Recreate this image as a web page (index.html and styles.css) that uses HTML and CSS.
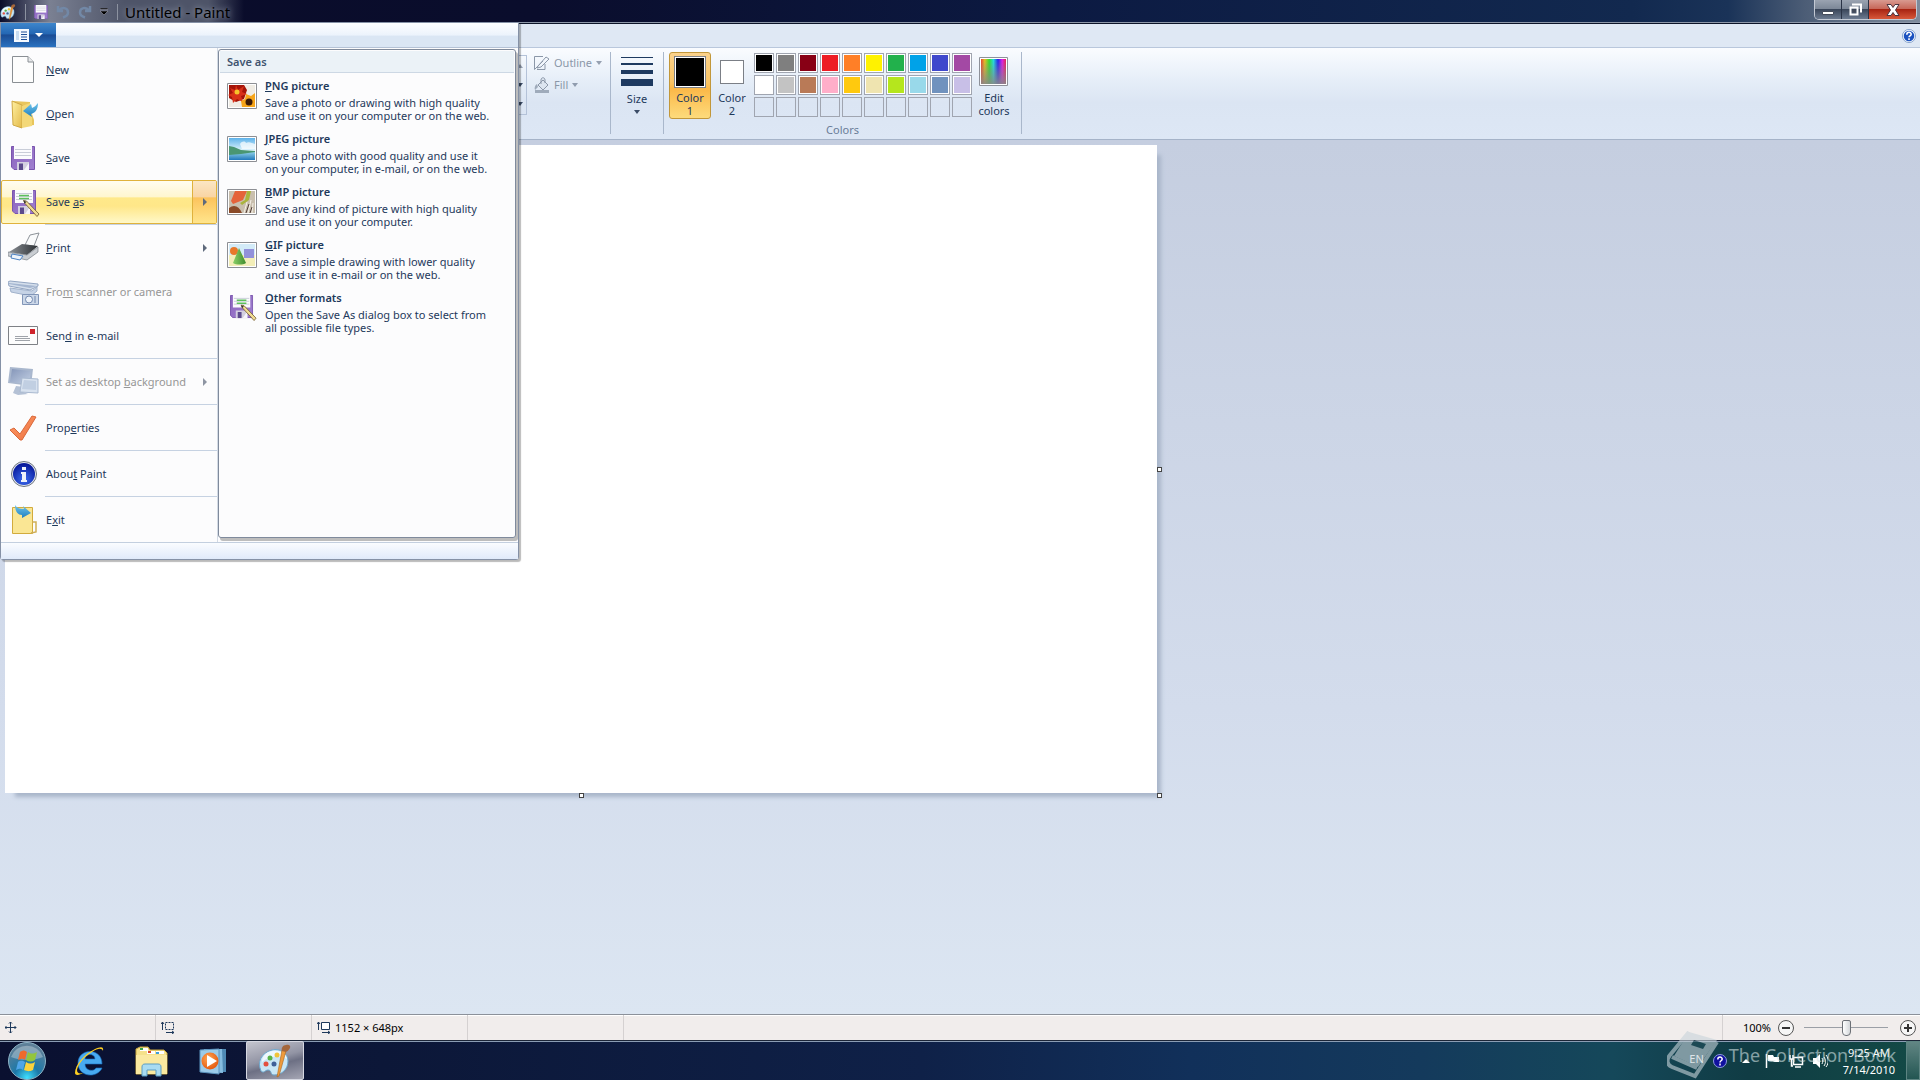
FILE: index.html
```
<!DOCTYPE html>
<html lang="en">
<head>
  <meta charset="utf-8">
  <title>Untitled - Paint</title>
  <link rel="stylesheet" href="styles.css">
</head>
<body>
  <!-- shared icons -->
  <svg class="defs" width="0" height="0">
    <defs>
      <linearGradient id="g-purple" x1="0" y1="0" x2="1" y2="1"><stop offset="0" stop-color="#8a63bd"/><stop offset="1" stop-color="#a080d0"/></linearGradient>
      <linearGradient id="g-folder" x1="0" y1="0" x2="1" y2="1"><stop offset="0" stop-color="#fff0a0"/><stop offset="1" stop-color="#e2b94a"/></linearGradient>
      <linearGradient id="g-blue" x1="0" y1="0" x2="0" y2="1"><stop offset="0" stop-color="#6fc4ea"/><stop offset="1" stop-color="#1f7fc0"/></linearGradient>
      <linearGradient id="g-check" x1="0" y1="0" x2="1" y2="1"><stop offset="0" stop-color="#ff9d68"/><stop offset="1" stop-color="#ec7040"/></linearGradient>
      <linearGradient id="g-sky" x1="0" y1="0" x2="0" y2="1"><stop offset="0" stop-color="#5db2ea"/><stop offset="1" stop-color="#e6f7fd"/></linearGradient>
      <linearGradient id="g-sea" x1="0" y1="0" x2="0" y2="1"><stop offset="0" stop-color="#8fd0e8"/><stop offset="1" stop-color="#2178bb"/></linearGradient>
      <linearGradient id="g-screen" x1="0" y1="0" x2="1" y2="1"><stop offset="0" stop-color="#8495b8"/><stop offset="1" stop-color="#c3d0e4"/></linearGradient>
      <linearGradient id="g-printer" x1="0" y1="0" x2="1" y2="0"><stop offset="0" stop-color="#8c9197"/><stop offset="1" stop-color="#2c3034"/></linearGradient>
      <linearGradient id="g-cone" x1="0" y1="0" x2="1" y2="0"><stop offset="0" stop-color="#8bd068"/><stop offset="1" stop-color="#3f8c2c"/></linearGradient>
      <radialGradient id="g-info" cx="50%" cy="75%" r="70%"><stop offset="0" stop-color="#3c6cf0"/><stop offset="1" stop-color="#08199a"/></radialGradient>
      <radialGradient id="g-orb" cx="50%" cy="95%" r="85%"><stop offset="0" stop-color="#3fe0ff"/><stop offset=".4" stop-color="#1c78a8"/><stop offset="1" stop-color="#5d7f98"/></radialGradient>
      <radialGradient id="g-play" cx="40%" cy="35%" r="70%"><stop offset="0" stop-color="#ffa552"/><stop offset="1" stop-color="#e4560c"/></radialGradient>
      <linearGradient id="g-rainbow"><stop offset="0" stop-color="#e8402a"/><stop offset=".15" stop-color="#e6c021"/><stop offset=".33" stop-color="#2fe02a"/><stop offset=".5" stop-color="#1fdde0"/><stop offset=".68" stop-color="#2020f0"/><stop offset=".85" stop-color="#e01be8"/><stop offset="1" stop-color="#e8204a"/></linearGradient>
      <linearGradient id="g-fade" x1="0" y1="0" x2="0" y2="1"><stop offset="0" stop-color="#888" stop-opacity="0"/><stop offset="1" stop-color="#888" stop-opacity=".9"/></linearGradient>
      <symbol id="i-floppy" viewBox="0 0 24 24">
        <path d="M.5.5h23v23H3L.5 21z" fill="url(#g-purple)" stroke="#7a55ae"/>
        <path d="M3 0h18v13H3z" fill="#fbfbfd"/>
        <path d="M4 3.500h16M4 6.500h16M4 9.500h16" stroke="#c9cdd8"/>
        <path d="M6 16h12v8H6z" fill="#d3cfe0"/>
        <path d="M8 17.500h4V24H8z" fill="#5b4a8c"/>
        <path d="M13 24l5-7v7z" fill="#f7f6fb"/>
      </symbol>
      <symbol id="i-saveas" viewBox="0 0 28 28">
        <use href="#i-floppy" width="24" height="24"/>
        <path d="M7 5.500h10M7 8.500h10" stroke="#5cc05c" stroke-width="1.500"/>
        <path d="M11.500 10.500l3 .5 12.500 13-2 2.500-12-13z" fill="#f0dc92" stroke="#6d5328" stroke-width=".8"/>
        <path d="M11.500 10.500l1 3 2-1.500z" fill="#333"/>
      </symbol>
      <symbol id="i-palette" viewBox="0 0 34 34">
        <path d="M3 27C-1 18 3 9 14 6c8-2 16 3 16 11 0 8-6 14-14 14-4 0-2-5-6-5-3 0-4 4-7 1z" fill="#c9e6f5" stroke="#6da6cc"/>
        <path d="M4 18c0-6 4-10 10-11 7-1 14 2 15 8-8-4-17-3-25 3z" fill="#eef8fd"/>
        <circle cx="8" cy="20" r="2.500" fill="#e3503f"/><circle cx="12" cy="14" r="2.500" fill="#58b348"/><circle cx="19" cy="11" r="2.500" fill="#f0c43a"/><circle cx="16" cy="20" r="2.500" fill="#3f5f97"/>
        <path d="M28 7l-7 25-2 1 5-27z" fill="#ee9b3c" stroke="#a9641d" stroke-width=".6"/>
        <path d="M24 7c-1-3 1-6 4-6 3-1 5 1 4 3-2 3-3 5-8 3z" fill="#a5673c"/>
      </symbol>
      <symbol id="i-help" viewBox="0 0 16 16">
        <circle cx="8" cy="8" r="7.500" fill="#f4f8fd" stroke="#7d9cc8"/>
        <circle cx="8" cy="8" r="6" fill="#1b52c0"/>
        <path d="M5.500 6.500c0-3.500 5-3.500 5-.5 0 2-2.500 1.800-2.500 3.500M8 10.500v2" fill="none" stroke="#fff" stroke-width="1.800"/>
      </symbol>
    </defs>
  </svg>

  <header class="titlebar">
    <div class="quick">
      <svg width="16" height="16"><use href="#i-palette"/></svg>
      <span class="divider"></span>
      <button class="quick-btn" aria-label="Save"><svg width="14" height="14"><use href="#i-floppy"/></svg></button>
      <button class="quick-btn" aria-label="Undo"><svg width="14" height="14" viewBox="0 0 14 14"><path d="M2 1v5h5M3 5.500c3-4 9-3 9 2 0 3-2 4-5 5" fill="none" stroke="#7288a6" stroke-width="2.500"/></svg></button>
      <button class="quick-btn" aria-label="Redo"><svg width="14" height="14" viewBox="0 0 14 14"><path d="M12 1v5H7M11 5.500C8 1.500 2 2.500 2 7.500c0 3 2 4 5 5" fill="none" stroke="#7288a6" stroke-width="2.500"/></svg></button>
      <button class="quick-btn" aria-label="Customize"><svg width="8" height="7" viewBox="0 0 8 7"><path d="M0 0h8v1.500H0zM0 3h8L4 7z" fill="#000" stroke="#ccd" stroke-width=".4"/></svg></button>
      <span class="divider"></span>
    </div>
    <h1 class="title">Untitled - Paint</h1>
    <div class="window-btns">
      <button class="win-btn" aria-label="Minimize"><svg width="14" height="14" viewBox="0 0 14 14"><path d="M1.500 8.500h11v3h-11z" fill="#fff" stroke="#444b5a"/></svg></button>
      <button class="win-btn" aria-label="Restore"><svg width="14" height="14" viewBox="0 0 14 14"><path d="M4 1.500h9v8M2.500 4.500h7v7h-7z" fill="none" stroke="#fff" stroke-width="2"/><path d="M4.500 6.500h3v3h-3z" fill="#444b5a"/></svg></button>
      <button class="win-btn close" aria-label="Close"><svg width="14" height="14" viewBox="0 0 14 14"><path d="M1 1.500h4l2 3 2-3h4L9.500 7l3.500 5.500H9l-2-3-2 3H1L4.500 7z" fill="#fff" stroke="#4b3440"/></svg></button>
    </div>
  </header>

  <nav class="tabs">
    <button class="help" aria-label="Help"><svg width="14" height="14"><use href="#i-help"/></svg></button>
  </nav>

  <section class="ribbon">
    <div class="scroll">
      <span class="arrow up"></span><span class="arrow"></span><span class="arrow last"></span>
    </div>
    <div class="shape-opts">
      <button class="opt" disabled><svg width="16" height="14" viewBox="0 0 16 14"><path d="M9 .5H.5v13L9 5M3 13.500h8V8M4 10l8-9 3 2-8 8-4 1z" fill="none" stroke="#8b97a8"/></svg>Outline<span class="arrow"></span></button>
      <button class="opt" disabled><svg width="16" height="16" viewBox="0 0 16 16"><path d="M4 8l5-5 5 5-5 5zM7 7V3c0-3 4-3 4 0v3" fill="#dce5f0" stroke="#8b97a8"/><path d="M3 7C1 8 0 11 1 13l3-3zM1 13h14v3H1z" fill="#9fabbb"/></svg>Fill<span class="arrow"></span></button>
    </div>
    <div class="group">
      <button class="big size">
        <span class="lines"><i class="l1"></i><i class="l2"></i><i class="l3"></i><i class="l4"></i></span>
        Size<span class="arrow"></span>
      </button>
    </div>
    <div class="group colors">
      <div class="group-row">
        <button class="big selected"><span class="chip black"></span>Color<br>1</button>
        <button class="big"><span class="chip white"></span>Color<br>2</button>
        <div class="palette">
          <button class="cell c-black" aria-label="Black"></button>
          <button class="cell c-gray" aria-label="Gray-50%"></button>
          <button class="cell c-darkred" aria-label="Dark red"></button>
          <button class="cell c-red" aria-label="Red"></button>
          <button class="cell c-orange" aria-label="Orange"></button>
          <button class="cell c-yellow" aria-label="Yellow"></button>
          <button class="cell c-green" aria-label="Green"></button>
          <button class="cell c-turquoise" aria-label="Turquoise"></button>
          <button class="cell c-indigo" aria-label="Indigo"></button>
          <button class="cell c-purple" aria-label="Purple"></button>
          <button class="cell c-white" aria-label="White"></button>
          <button class="cell c-lightgray" aria-label="Gray-25%"></button>
          <button class="cell c-brown" aria-label="Brown"></button>
          <button class="cell c-rose" aria-label="Rose"></button>
          <button class="cell c-gold" aria-label="Gold"></button>
          <button class="cell c-lightyellow" aria-label="Light yellow"></button>
          <button class="cell c-lime" aria-label="Lime"></button>
          <button class="cell c-lightturquoise" aria-label="Light turquoise"></button>
          <button class="cell c-bluegray" aria-label="Blue-gray"></button>
          <button class="cell c-lavender" aria-label="Lavender"></button>
          <button class="cell" aria-label="Empty"></button>
          <button class="cell" aria-label="Empty"></button>
          <button class="cell" aria-label="Empty"></button>
          <button class="cell" aria-label="Empty"></button>
          <button class="cell" aria-label="Empty"></button>
          <button class="cell" aria-label="Empty"></button>
          <button class="cell" aria-label="Empty"></button>
          <button class="cell" aria-label="Empty"></button>
          <button class="cell" aria-label="Empty"></button>
          <button class="cell" aria-label="Empty"></button>
        </div>
        <button class="big edit">
          <svg width="30" height="30" viewBox="0 0 30 30"><path d="M.5.5h28v28H.5z" fill="#fff" stroke="#8d9199"/><path d="M2 2h25v25H2z" fill="url(#g-rainbow)"/><path d="M2 2h25v25H2z" fill="url(#g-fade)"/></svg>
          Edit<br>colors
        </button>
      </div>
      <div class="group-name">Colors</div>
    </div>
  </section>

  <main class="workspace">
    <div class="sheet">
      <canvas class="drawing" width="1152" height="648"></canvas>
      <span class="handle right"></span>
      <span class="handle bottom"></span>
      <span class="handle corner"></span>
    </div>
  </main>

  <footer class="status">
    <div class="stat"><svg width="12" height="12" viewBox="0 0 12 12"><path d="M5.500 0v11M0 5.500h11M4 1.500l1.500-1.500L7 1.500M4 9.500L5.500 11 7 9.500M1.500 4L0 5.500 1.500 7M9.500 4L11 5.500 9.500 7" fill="none" stroke="#1e395b"/></svg></div>
    <div class="stat"><svg width="14" height="13" viewBox="0 0 14 13"><path d="M4.500 1.500h8v7h-8z" fill="none" stroke="#1e395b" stroke-dasharray="2 1"/><path d="M1.500 1v8M0 3l1.500-2L3 3M5 11.500h8M11 10l2 1.500-2 1.500" fill="none" stroke="#1e395b"/></svg></div>
    <div class="stat"><svg width="14" height="13" viewBox="0 0 14 13"><path d="M4.500 1.500h8v7h-8z" fill="#fff" stroke="#1e395b"/><path d="M1.500 1v8M0 3l1.500-2L3 3M5 11.500h8M11 10l2 1.500-2 1.500" fill="none" stroke="#1e395b"/></svg>1152 × 648px</div>
    <div class="stat"></div>
    <div class="stat wide"></div>
    <div class="zoom">
      <label for="zoom">100%</label>
      <button class="round" aria-label="Zoom out"><svg width="16" height="16" viewBox="0 0 16 16"><circle cx="8" cy="8" r="7.500" fill="#f6f6f6" stroke="#555"/><path d="M4 8h8" stroke="#333" stroke-width="2"/></svg></button>
      <input type="range" id="zoom" min="0" max="100" value="50">
      <button class="round" aria-label="Zoom in"><svg width="16" height="16" viewBox="0 0 16 16"><circle cx="8" cy="8" r="7.500" fill="#f6f6f6" stroke="#555"/><path d="M4 8h8M8 4v8" stroke="#333" stroke-width="2"/></svg></button>
    </div>
  </footer>

  <footer class="taskbar">
    <button class="start" aria-label="Start">
      <svg width="38" height="38" viewBox="0 0 38 38"><circle cx="19" cy="19" r="18.500" fill="url(#g-orb)" stroke="#8fb4c6"/><path d="M3 15a17 17 0 0 1 32 0c-9 4-23 4-32 0z" fill="#fff" opacity=".3"/>
      <path d="M12 10c3-2 5-2 7 0l-2 8c-2-2-4-1-7 0z" fill="#ee6a2c"/><path d="M20 10c3 2 5 2 9 0l-2 8c-3 2-6 2-9 0z" fill="#93c53c"/><path d="M10 20c3-2 5-1 7 0l-2 8c-2-2-4-1-7 0z" fill="#4fa5e8"/><path d="M18 20c3 2 6 2 9 0l-2 8c-4 2-6 1-9 0z" fill="#fbd23c"/></svg>
    </button>
    <button class="task" aria-label="Internet Explorer">
      <svg width="32" height="32" viewBox="0 0 32 32"><path d="M29 19H12c0 7 9 8 11 4h6c-5 11-24 9-24-5C5 3 29 2 29 19zM12 14h10c0-6-10-6-10 0z" fill="#48aaf0" stroke="#1770c2" stroke-width=".6"/><path d="M30 6c1-5-3-4-8-2C11 9 2 20 2 28c0 3 5 2 8 0-4 1-6 0-6-3 1-6 8-14 15-18 6-4 10-4 11-1z" fill="#ffd022"/></svg>
    </button>
    <button class="task" aria-label="Windows Explorer">
      <svg width="34" height="32" viewBox="0 0 34 32"><path d="M2 4l4-2h8l2 3h14l3 3v21H2z" fill="#f5e18a" stroke="#c7a53c"/><path d="M6 3h8v3H6zM13 6h8v3h-8zM22 6h8v3h-8z" fill="#fff"/><path d="M6 3h3v2H6z" fill="#33a44a"/><path d="M14 6h3v2h-3z" fill="#d8442c"/><path d="M22 7h3v2h-3z" fill="#3d9edb"/><path d="M2 10h31v19H2z" fill="#fae9a0"/><path d="M8 31V22c0-2 1-3 3-3h13c2 0 3 1 3 3v9h-5v-6h-9v6z" fill="#a8dbf2" stroke="#5b9dc4"/></svg>
    </button>
    <button class="task" aria-label="Media Player">
      <svg width="28" height="28" viewBox="0 0 28 28"><path d="M8 2h19v23H8z" fill="#4f8ab5"/><path d="M5 2h18l1 24-19-1z" fill="#86bde0"/><path d="M1 3l19-1v25L1 25z" fill="#9bcbe9" stroke="#5b93bd"/><circle cx="11" cy="14" r="8.500" fill="url(#g-play)"/><path d="M8 8l10 6-10 6z" fill="#fff"/></svg>
    </button>
    <button class="task active" aria-label="Paint"><svg width="34" height="34"><use href="#i-palette"/></svg></button>
    <div class="tray">
      <span class="lang">EN</span>
      <svg width="14" height="14" viewBox="0 0 14 14"><circle cx="7" cy="7" r="6.500" fill="#10109e" stroke="#8f9ae0"/><path d="M4.800 5.500c0-3.200 4.400-3 4.400-.5C9.200 7 7 6.500 7 8.500M7 9.500v2" fill="none" stroke="#fff" stroke-width="1.500"/></svg>
      <span class="tray-arrow"></span>
      <svg width="15" height="14" viewBox="0 0 15 14"><path d="M1.500 0v14" stroke="#fff" stroke-width="1.500"/><path d="M3 1h5l1 2h5v5H9L8 7H3z" fill="#fff"/></svg>
      <svg width="15" height="14" viewBox="0 0 15 14"><path d="M4.500 3.500h9v7h-9zM6 13h6M1 1v4h3V1M2.500 5v7H4" fill="none" stroke="#fff" stroke-width="1.500"/></svg>
      <svg width="15" height="14" viewBox="0 0 15 14"><path d="M0 4h3l4-4v14l-4-4H0z" fill="#fff"/><path d="M9 4c1 2 1 4 0 6M11 3c2 3 2 6 0 9M13 1c3 4 3 8 0 12" fill="none" stroke="#fff"/></svg>
      <div class="clock"><span>9:25 AM</span><span>7/14/2010</span></div>
      <button class="show-desktop" aria-label="Show desktop"></button>
    </div>
    <div class="watermark">
      <svg width="54" height="48" viewBox="0 0 54 48"><path d="M22 1l28 8-19 27-24-11z" fill="#c8d4da"/><path d="M27 9l12 4-3 5-12-4z" fill="#24505a"/><path d="M22 1L3 24c-4 5-3 10 2 12l23 9 22-34M5 26l25 11" fill="none" stroke="#c8d4da" stroke-width="4"/></svg>
      <span>The Collection Book</span>
    </div>
  </footer>

  <div class="app-menu">
    <div class="menu-top">
      <button class="file-btn" aria-label="Paint menu">
        <svg width="15" height="13" viewBox="0 0 15 13"><path d="M0 0h15v13H0z" fill="#f4f9ff"/><path d="M2 2h3v9H2z" fill="#c8dcf0"/><path d="M7 3h6M7 5.500h6M7 8h6M7 10.500h6" stroke="#1e4f96"/></svg>
        <span class="arrow"></span>
      </button>
    </div>
    <div class="menu-body">
      <ul class="menu-list">
        <li><button class="item">
          <svg width="32" height="32" viewBox="0 0 32 32"><path d="M4.500 2.500H20l5.500 5.500v20.500h-21z" fill="#fdfdfd" stroke="#8a8f94"/><path d="M20 2.500V8h5.500" fill="#e6e8ea" stroke="#8a8f94"/></svg>
          <span class="label"><u>N</u>ew</span></button></li>
        <li><button class="item">
          <svg width="32" height="32" viewBox="0 0 32 32"><path d="M5 3l17 1v6l4 12v5l-16 2z" fill="#e8c55c"/><path d="M4 3l10 4v23l-9-3z" fill="url(#g-folder)" stroke="#d0a945"/><path d="M14 8l8-3 2 14v9l-10 2z" fill="#f3d878"/><path d="M15 13l8-7 1 4c3-1 4-3 6-5 0 7-3 10-7 11l1 3z" fill="url(#g-blue)"/></svg>
          <span class="label"><u>O</u>pen</span></button></li>
        <li><button class="item">
          <svg width="32" height="32"><use href="#i-floppy" x="3" y="4" width="24" height="24"/></svg>
          <span class="label"><u>S</u>ave</span></button></li>
        <li><button class="item hot">
          <svg width="32" height="32"><use href="#i-saveas" x="4" y="4" width="28" height="28"/></svg>
          <span class="label">Save <u>a</u>s</span><span class="more"><span class="arrow side"></span></span></button></li>
        <li class="line"></li>
        <li><button class="item">
          <svg width="32" height="32" viewBox="0 0 32 32"><path d="M17 13l5-10 9-2-5 13z" fill="#fafbfc" stroke="#8c9298"/><path d="M1 20l13-8 16 2-11 9z" fill="url(#g-printer)"/><path d="M0 20l19 3 11-8v5l-11 8-19-4z" fill="#c9cdd2" stroke="#797f86" stroke-width=".7"/><path d="M4 22l11 2-3 4-9-2z" fill="#eef4fb" stroke="#4d83c4"/></svg>
          <span class="label"><u>P</u>rint</span><span class="more"><span class="arrow side"></span></span></button></li>
        <li><button class="item" disabled>
          <svg width="32" height="32" viewBox="0 0 32 32"><path d="M0 6l2-1 28 3v2l-8 4L1 10z" fill="#d5dfec" stroke="#92a5c2"/><path d="M1 7l28 3-7 2L1 8z" fill="#a5b6d0"/><path d="M2 12l22 3 5-4v4l-6 5L3 16z" fill="#c6d3e6" stroke="#a1b2cb"/><path d="M14.500 18.500h16v10h-16z" fill="#cbd7e8" stroke="#8296b8"/><circle cx="21" cy="23.500" r="3.500" fill="#eef3fa" stroke="#7288ae"/><path d="M27 20v7" stroke="#7288ae"/></svg>
          <span class="label">Fro<u>m</u> scanner or camera</span></button></li>
        <li><button class="item">
          <svg width="32" height="32" viewBox="0 0 32 32"><path d="M.5 6.500h29v18H.5z" fill="#fdfdfd" stroke="#7e8186"/><path d="M22 9h5v5h-5z" fill="#d0242c"/><path d="M7 16.500h13M7 18.500h15M7 20.500h15" stroke="#a0a4aa"/></svg>
          <span class="label">Sen<u>d</u> in e-mail</span></button></li>
        <li class="line"></li>
        <li><button class="item" disabled>
          <svg width="32" height="32" viewBox="0 0 32 32"><path d="M2 1l23 2-2 17-23-3z" fill="#a9b7cd"/><path d="M4 3l19 2-2 13-19-2z" fill="url(#g-screen)"/><path d="M8 20l8 1-1 5 5 2-10 1-5-2z" fill="#b4c1d5"/><path d="M14 12l16 1v14l-18-1z" fill="#d8e2ef" stroke="#a9b9d0"/><path d="M16 14l12 1v9l-14-1z" fill="#c1cfe2"/></svg>
          <span class="label">Set as desktop <u>b</u>ackground</span><span class="more"><span class="arrow side"></span></span></button></li>
        <li class="line"></li>
        <li><button class="item">
          <svg width="32" height="32" viewBox="0 0 32 32"><path d="M2 18l4-2 6 6L24 4l4 1-14 23h-2z" fill="url(#g-check)" stroke="#d9683a" stroke-linejoin="round"/></svg>
          <span class="label">Prop<u>e</u>rties</span></button></li>
        <li class="line"></li>
        <li><button class="item">
          <svg width="32" height="32" viewBox="0 0 32 32"><circle cx="16" cy="16" r="12.500" fill="#e4e8ee" stroke="#6d7581"/><circle cx="16" cy="16" r="11" fill="url(#g-info)"/><path d="M14 9h4v3h-4zM13 14h5v8h1v2h-6v-2h1v-6h-1z" fill="#eef2fa"/></svg>
          <span class="label">Abou<u>t</u> Paint</span></button></li>
        <li class="line"></li>
        <li><button class="item">
          <svg width="32" height="32" viewBox="0 0 32 32"><path d="M4.500 3.500h20v26h-20z" fill="#fae694" stroke="#d2ab3c"/><path d="M24 18h4v10l-5 1" fill="none" stroke="#cfae55" stroke-width="1.500"/><path d="M7 1c2 3 5 4 9 4l-1-3 8 7-9 5v-3C9 11 7 6 7 1z" fill="url(#g-blue)"/></svg>
          <span class="label">E<u>x</u>it</span></button></li>
      </ul>
      <div class="submenu">
        <h2>Save as</h2>
        <button class="format">
          <svg width="30" height="26" viewBox="0 0 30 26"><path d="M.5.5h29v25H.5z" fill="#fff" stroke="#8d8f94"/><path d="M2 2h26v22H2z" fill="#f0ece4"/><path d="M2 2h15l3 5-3 9-8 3-7-4z" fill="#a51408"/><path d="M9 2l2 5 6-4-2 6 5 2-6 2 2 6-6-3-4 4-1-6-4-2 5-2-3-5 5 2z" fill="#d83018"/><circle cx="10" cy="9" r="2.500" fill="#f6c22a"/><path d="M15 24l-1-6 4-2 1-5 5 2 4-3v14z" fill="#f7a51a"/><circle cx="22" cy="19" r="3.500" fill="#3b1a08"/></svg>
          <span class="format-text"><b><u>P</u>NG picture</b>Save a photo or drawing with high quality<br>and use it on your computer or on the web.</span>
        </button>
        <button class="format">
          <svg width="30" height="26" viewBox="0 0 30 26"><path d="M.5.5h29v25H.5z" fill="#fff" stroke="#8d8f94"/><path d="M2 2h26v13H2z" fill="url(#g-sky)"/><path d="M13 8c2-3 5-3 6-1 3-2 6 0 9 1v5H15z" fill="#fff" opacity=".7"/><path d="M2 16h26v8H2z" fill="url(#g-sea)"/><path d="M2 10l5 1 7 3 14 1v1l-14 2-12 1z" fill="#4a9672"/></svg>
          <span class="format-text"><b><u>J</u>PEG picture</b>Save a photo with good quality and use it<br>on your computer, in e-mail, or on the web.</span>
        </button>
        <button class="format">
          <svg width="30" height="26" viewBox="0 0 30 26"><path d="M.5.5h29v25H.5z" fill="#fff" stroke="#8d8f94"/><path d="M2 2h26v22H2z" fill="#c9bfae"/><path d="M8 2h12l-4 9-10 4-2-3z" fill="#e5633a"/><path d="M20 2h4l-2 9-7 5-2-2 5-3z" fill="#a9b43c"/><path d="M2 19c5-4 10-2 13 5H2z" fill="#8a4a28"/><path d="M17 24l3-11M21 24l3-13M25 24l1-10" stroke="#f6f1e8"/><path d="M19 24l3-9M23 24l2-6" stroke="#55403a"/></svg>
          <span class="format-text"><b><u>B</u>MP picture</b>Save any kind of picture with high quality<br>and use it on your computer.</span>
        </button>
        <button class="format">
          <svg width="30" height="26" viewBox="0 0 30 26"><path d="M.5.5h29v25H.5z" fill="#fff" stroke="#8d8f94"/><path d="M2 2h26v11H2z" fill="#d3ebf8"/><path d="M2 13h26v11H2z" fill="#f3eeb8"/><path d="M17 7h10v9H17z" fill="#9291da"/><circle cx="7" cy="9" r="4" fill="#e8782a"/><path d="M12 6l7 15c-3 2-10 2-13 0z" fill="url(#g-cone)"/></svg>
          <span class="format-text"><b><u>G</u>IF picture</b>Save a simple drawing with lower quality<br>and use it in e-mail or on the web.</span>
        </button>
        <button class="format">
          <svg width="30" height="28" viewBox="0 0 30 28"><use href="#i-saveas" x="3" width="27" height="27"/></svg>
          <span class="format-text"><b><u>O</u>ther formats</b>Open the Save As dialog box to select from<br>all possible file types.</span>
        </button>
      </div>
    </div>
    <div class="menu-foot"></div>
  </div>
</body>
</html>
```
FILE: styles.css
```
* {
  box-sizing: border-box;
}

body {
  margin: 0;
  height: 100vh;
  display: flex;
  flex-direction: column;
  overflow: hidden;
  font: 11px/13px "Noto Sans", "Open Sans", sans-serif;
  color: #1e395b;
}

button {
  margin: 0;
  padding: 0;
  border: none;
  background: none;
  font: inherit;
  color: inherit;
}

svg {
  display: block;
  flex: none;
}

.defs {
  position: absolute;
}

/* title bar */

.titlebar {
  display: flex;
  height: 24px;
  flex: none;
  border-bottom: 1px solid #0c1428;
  box-shadow: inset 0 -1px #8d97a8;
  background: linear-gradient(90deg, #0a0c2a 0%, #0a0d2c 28%, #0c1a42 55%, #12294f 85%, #1a3358 90%, #4c5d76 94%, #7e8b9c 100%);
}

.quick {
  display: flex;
  align-items: center;
  gap: 8px;
  padding-right: 7px;
  background: linear-gradient(90deg, #5a607400, #7a8092 40%, #4e5468 100%);
}

.quick-btn {
  display: flex;
}

.divider {
  width: 1px;
  height: 16px;
  margin-left: 1px;
  background: #8c92a0;
}

.title {
  margin: 0;
  padding-right: 14px;
  font-size: 15px;
  line-height: 24px;
  font-weight: normal;
  color: #000;
  background: linear-gradient(90deg, #4e5468, #4e5468 70%, #4e546800);
  text-shadow: 0 0 6px #aab0c0;
}

.window-btns {
  display: flex;
  margin: 0 3px 3px auto;
  border: 1px solid #c3c9d4;
  border-top: none;
  border-radius: 0 0 5px 5px;
  overflow: hidden;
}

.win-btn {
  display: flex;
  align-items: center;
  justify-content: center;
  width: 27px;
  border-right: 1px solid #2a3346;
  background: linear-gradient(#9aa3b1, #7d8898 45%, #3a465a 50%, #6c7a90);
}

.win-btn.close {
  width: 47px;
  border: none;
  background: linear-gradient(#d99a90, #c7685a 45%, #a82412 50%, #d8583a);
}

/* ribbon */

.tabs {
  display: flex;
  flex: none;
  height: 24px;
  justify-content: flex-end;
  align-items: center;
  padding-right: 4px;
  background: #dfe8f4;
  border-bottom: 1px solid #b9c7dc;
}

.ribbon {
  display: flex;
  flex: none;
  height: 92px;
  padding: 4px 0 5px 512px;
  background: linear-gradient(#fafcff, #e6eef8 35%, #dbe5f3 60%, #dde7f5);
  border-bottom: 1px solid #a5b3c8;
}

.arrow {
  width: 0;
  height: 0;
  border: 3px solid transparent;
  border-top: 4px solid #3b4c66;
  border-bottom: none;
}

.arrow.up {
  transform: rotate(180deg);
  opacity: 0.5;
}

.arrow.side {
  border: 4px solid transparent;
  border-left: 4px solid #5f6a7c;
  border-right: none;
}

.scroll {
  display: flex;
  flex-direction: column;
  justify-content: space-around;
  align-items: center;
  width: 15px;
  height: 60px;
  margin-top: 3px;
  border: 1px solid #b4c2d8;
}

.shape-opts {
  display: flex;
  flex-direction: column;
  gap: 7px;
  align-items: flex-start;
  padding: 4px 8px 0 7px;
  width: 83px;
}

.opt {
  display: flex;
  align-items: center;
  gap: 4px;
  color: #8b97a8;
  line-height: 14px;
}

.opt .arrow {
  opacity: 0.5;
}

.group {
  padding: 0 5px;
  border-left: 1px solid #a9b7cb;
}

.group.colors {
  border-right: 1px solid #a9b7cb;
}

.group-row {
  display: flex;
}

.group-name {
  text-align: center;
  color: #6a7d98;
  line-height: 22px;
}

.big {
  width: 42px;
  height: 67px;
  border: 1px solid transparent;
  border-radius: 3px;
  text-align: center;
}

.big .arrow {
  display: block;
  margin: 5px auto 0;
}

.big.selected {
  border-color: #c2973a;
  background: linear-gradient(#fbd28c, #f9c465 45%, #fbb848 55%, #fddb7c);
}

.lines {
  display: block;
  width: 32px;
  height: 35px;
  margin: 0 auto;
}

.lines i {
  display: block;
  margin-bottom: 5px;
  background: #1e3a60;
}

.lines .l1 { height: 1px; }
.lines .l2 { height: 2px; }
.lines .l3 { height: 4px; }
.lines .l4 { height: 7px; }

.chip {
  display: block;
  width: 32px;
  height: 32px;
  margin: 1px auto 3px;
  border: 1px solid #7b7f86;
  background: #000;
  box-shadow: inset 0 0 0 1px #fff;
}

.chip.white {
  width: 24px;
  height: 24px;
  margin: 5px auto 7px;
  background: #fff;
}

.palette {
  display: grid;
  grid-template-columns: repeat(10, 20px);
  grid-auto-rows: 20px;
  gap: 2px;
  padding: 1px 0 0 1px;
}

.cell {
  border: 1px solid #a0a5b0;
}

.cell[class*="c-"] {
  box-shadow: inset 0 0 0 1px #fff;
}

.c-black { background: #000; }
.c-gray { background: #7f7f7f; }
.c-darkred { background: #880015; }
.c-red { background: #ed1c24; }
.c-orange { background: #ff7f27; }
.c-yellow { background: #fff200; }
.c-green { background: #22b14c; }
.c-turquoise { background: #00a2e8; }
.c-indigo { background: #3f48cc; }
.c-purple { background: #a349a4; }
.c-white { background: #fff; }
.c-lightgray { background: #c3c3c3; }
.c-brown { background: #b97a57; }
.c-rose { background: #ffaec9; }
.c-gold { background: #ffc90e; }
.c-lightyellow { background: #efe4b0; }
.c-lime { background: #b5e61d; }
.c-lightturquoise { background: #99d9ea; }
.c-bluegray { background: #7092be; }
.c-lavender { background: #c8bfe7; }

.big.edit {
  width: 44px;
}

.big.edit svg {
  margin: 2px auto 4px;
}

/* workspace */

.workspace {
  flex: 1;
  min-height: 0;
  padding: 5px;
  background: linear-gradient(#c5cee0, #d3dcec 65%, #dce6f2);
}

.sheet {
  position: relative;
  width: max-content;
}

.drawing {
  display: block;
  background: #fff;
  box-shadow: 7px 7px 4px -3px #a9b6ca;
}

.handle {
  position: absolute;
  width: 5px;
  height: 5px;
  border: 1px solid #444;
  background: #fff;
}

.handle.right { left: 100%; top: 50%; margin-top: -2px; }
.handle.bottom { left: 50%; top: 100%; margin-left: -2px; }
.handle.corner { left: 100%; top: 100%; }

/* status bar */

.status {
  display: flex;
  flex: none;
  height: 26px;
  border-top: 1px solid #8c919a;
  background: #f1edec;
  box-shadow: inset 0 1px #fff;
  color: #000;
}

.stat {
  display: flex;
  align-items: center;
  gap: 4px;
  width: 156px;
  padding-left: 5px;
  border-right: 1px solid #d5d1d1;
}

.stat.wide {
  flex: 1;
}

.zoom {
  display: flex;
  align-items: center;
  gap: 7px;
  padding: 0 4px 0 20px;
}

.round {
  display: flex;
}

.zoom input {
  appearance: none;
  width: 84px;
  height: 16px;
  margin: 0 5px 0 3px;
  background: linear-gradient(#9b9fa6, #9b9fa6) center / 100% 1px no-repeat;
}

.zoom input::-webkit-slider-thumb {
  appearance: none;
  width: 9px;
  height: 16px;
  border: 1px solid #6c7076;
  border-radius: 2px 2px 4px 4px;
  background: linear-gradient(90deg, #fff, #d4d7da);
}

/* taskbar */

.taskbar {
  position: relative;
  display: flex;
  flex: none;
  height: 40px;
  border-top: 1px solid #1c2638;
  background: linear-gradient(90deg, #0a1030 0%, #0c1738 20%, #0f2148 48%, #11305a 62%, #143a5c 74%, #15485a 84%, #103c44 91%, #134a46 100%);
  box-shadow: inset 0 1px #8b9db4;
}

.start {
  width: 58px;
  padding: 1px 0 0 8px;
}

.task {
  display: flex;
  align-items: center;
  justify-content: center;
  width: 62px;
}

.task.active {
  width: 58px;
  margin: 0 2px;
  border: 1px solid #d6d8e2;
  border-radius: 2px;
  background: linear-gradient(165deg, #c4c5ce, #9294a4 45%, #6d7084 60%, #a5a6b4);
}

.tray {
  display: flex;
  align-items: center;
  gap: 9px;
  margin-left: auto;
  font-size: 11px;
  color: #fff;
}

.tray-arrow {
  margin: 0 6px;
  border: 4px solid transparent;
  border-top: none;
  border-bottom: 4px solid #fff;
}

.clock {
  display: flex;
  flex-direction: column;
  gap: 4px;
  text-align: center;
  padding: 0 2px 0 6px;
}

.lang {
  padding-bottom: 4px;
}

.show-desktop {
  width: 14px;
  height: 100%;
  border: 1px solid #5d8482;
  background: linear-gradient(#ffffff55, #ffffff11);
}

.watermark {
  position: absolute;
  right: 24px;
  bottom: 1px;
  display: flex;
  align-items: center;
  gap: 8px;
  font-size: 18px;
  line-height: 24px;
  color: #d4e2e4;
  opacity: 0.6;
}

/* application menu */

.app-menu {
  position: absolute;
  left: 0;
  top: 22px;
  border: 1px solid #8591a6;
  border-radius: 0 0 3px 3px;
  background: #fcfcfd;
  box-shadow: 2px 2px 1px #00000045;
}

.menu-top {
  display: flex;
  height: 25px;
  background: linear-gradient(#fdfeff, #ecf3fc 50%, #dae6f4 55%, #dae6f4);
  border-bottom: 1px solid #b4c2d6;
}

.file-btn {
  display: flex;
  align-items: center;
  justify-content: center;
  gap: 6px;
  width: 55px;
  background: linear-gradient(#3d86cc, #2467b4 45%, #1b4c94 50%, #2a72c0);
}

.file-btn .arrow {
  border-width: 4px;
  border-top-color: #fff;
  border-bottom: none;
}

.menu-body {
  display: flex;
}

.menu-list {
  width: 217px;
  margin: 0;
  padding: 0;
  list-style: none;
  border-right: 1px solid #d3dae4;
}

.line {
  height: 2px;
  margin-left: 44px;
  border-top: 1px solid #c6d2e2;
}

.item {
  display: flex;
  align-items: center;
  gap: 6px;
  width: 100%;
  height: 44px;
  padding-left: 7px;
  text-align: left;
}

.item:disabled {
  color: #969696;
}

.item:disabled .arrow {
  opacity: 0.7;
}

.label {
  padding-bottom: 2px;
}

.item.hot {
  padding-left: 6px;
  border: 1px solid #e0b23c;
  border-radius: 2px;
  background: linear-gradient(#fffdf0, #fff6cf 38%, #ffe98a 40%, #ffe789 60%, #fff8c8);
}

.more {
  display: flex;
  align-items: center;
  justify-content: center;
  align-self: stretch;
  width: 24px;
  margin-left: auto;
}

.hot .more {
  border-left: 1px solid #e0b23c;
  background: linear-gradient(#fbe6c4, #f9d5a4 38%, #fcc35c 40%, #ffe58c);
}

.submenu {
  width: 298px;
  margin: 1px 2px 4px 0;
  border: 1px solid #7f8a9c;
  border-radius: 3px;
  background: #fcfcfd;
  box-shadow: 2px 3px #00000040;
}

.submenu h2 {
  margin: 1px 1px 6px;
  padding: 4px 7px;
  font-size: 11px;
  line-height: 13px;
  font-weight: 600;
  color: #3f546f;
  background: #ebf2f7;
  border-bottom: 1px solid #cdd8e4;
}

.format {
  display: flex;
  gap: 8px;
  width: 100%;
  height: 53px;
  padding-left: 8px;
  text-align: left;
  white-space: nowrap;
}

.format svg {
  margin-top: 4px;
}

.format b {
  display: block;
  margin-bottom: 4px;
  font-weight: 600;
}

.menu-foot {
  height: 17px;
  border-top: 1px solid #c3cfdf;
  background: linear-gradient(#fafcff, #e0eafa);
}
```
